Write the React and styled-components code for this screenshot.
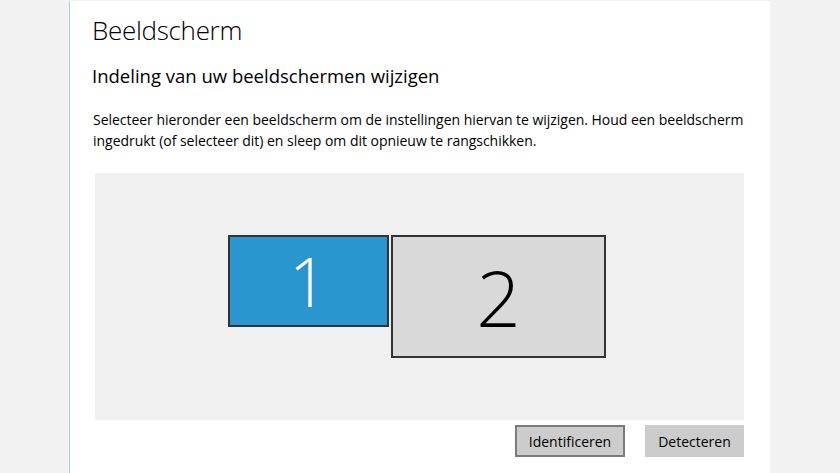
import React from "react";
import styled, { createGlobalStyle } from "styled-components";

const GlobalStyle = createGlobalStyle`
  html, body {
    margin: 0;
    padding: 0;
    background: #f2f2f2;
  }
  body {
    font-family: "Open Sans", "Noto Sans", "Liberation Sans", sans-serif;
    color: #000;
  }
`;

const Page = styled.div`
  display: flex;
  width: 840px;
  height: 473px;
  overflow: hidden;
`;

const Panel = styled.main`
  margin-left: 69px;
  width: 701px;
  height: 472px;
  margin-top: 1px;
  background: #fff;
  border-left: 1px solid #a9d1e8;
  padding: 0 0 0 22px;
  box-sizing: border-box;
`;

const Title = styled.h1`
  margin: 11px 0 0 0;
  font-size: 26px;
  font-weight: 300;
  line-height: 36px;
  letter-spacing: -0.3px;
`;

const Subtitle = styled.h2`
  margin: 15px 0 0 0;
  font-size: 18.5px;
  font-weight: 400;
  line-height: 26px;
`;

const Intro = styled.p`
  margin: 20px 0 0 1px;
  width: 660px;
  font-size: 14px;
  line-height: 21px;
  letter-spacing: -0.03px;
`;

const Canvas = styled.div`
  position: relative;
  margin: 22px 0 0 3px;
  width: 649px;
  height: 247px;
  background: #f0f0f0;
`;

const Monitor = styled.div`
  position: absolute;
  box-sizing: border-box;
  border: 2px solid #333;
  display: flex;
  align-items: center;
  justify-content: center;
  font-weight: 300;
  background: ${(p) => (p.$active ? "#2996cf" : "#d9d9d9")};
  color: ${(p) => (p.$active ? "#fff" : "#000")};
  font-size: ${(p) => p.$size}px;
  line-height: 1;
`;

const Actions = styled.div`
  display: flex;
  justify-content: flex-end;
  gap: 20px;
  width: 652px;
  margin-top: 5px;
`;

const Button = styled.button`
  box-sizing: border-box;
  height: 32px;
  padding: 0;
  width: ${(p) => p.$w}px;
  font-family: inherit;
  font-size: 14px;
  color: #000;
  background: #cccccc;
  border: 2px solid ${(p) => (p.$focused ? "#7a7a7a" : "#cccccc")};
`;

const monitors = [
  { id: 1, left: 133, top: 62, width: 161, height: 92, active: true, size: 68 },
  { id: 2, left: 296, top: 62, width: 215, height: 123, active: false, size: 78 },
];

export default function App() {
  return (
    <>
      <GlobalStyle />
      <Page>
        <Panel>
          <Title>Beeldscherm</Title>
          <Subtitle>Indeling van uw beeldschermen wijzigen</Subtitle>
          <Intro>
            Selecteer hieronder een beeldscherm om de instellingen hiervan te
            wijzigen. Houd een beeldscherm ingedrukt (of selecteer dit) en
            sleep om dit opnieuw te rangschikken.
          </Intro>
          <Canvas>
            {monitors.map((m) => (
              <Monitor
                key={m.id}
                $active={m.active}
                $size={m.size}
                style={{ left: m.left, top: m.top, width: m.width, height: m.height }}
              >
                {m.id}
              </Monitor>
            ))}
          </Canvas>
          <Actions>
            <Button $w={110} $focused>Identificeren</Button>
            <Button $w={99}>Detecteren</Button>
          </Actions>
        </Panel>
      </Page>
    </>
  );
}
